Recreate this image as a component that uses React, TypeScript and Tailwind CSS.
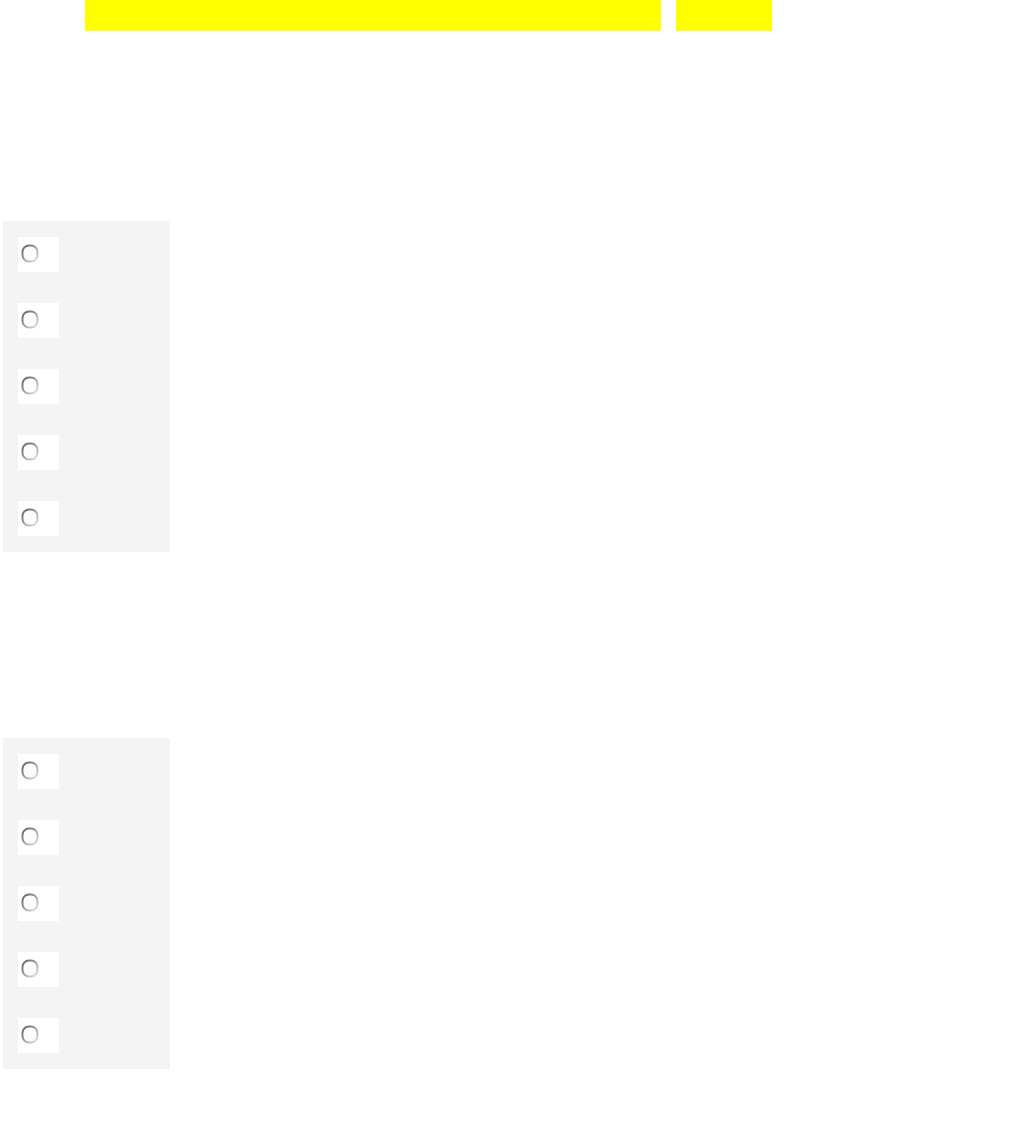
export default function App() {
    const rows = [0, 1, 2, 3, 4];

    function Radio() {
        return (
            <svg width="18" height="19" viewBox="0 0 18 19" className="block">
                <defs>
                    <linearGradient id="rg" x1="0" y1="0" x2="1" y2="1">
                        <stop offset="0%" stopColor="#5f5f5f" />
                        <stop offset="45%" stopColor="#9a9a9a" />
                        <stop offset="100%" stopColor="#e4e4e4" />
                    </linearGradient>
                </defs>
                <rect x="1.5" y="1.5" width="15" height="16" rx="6.5" fill="#fdfdfd" stroke="url(#rg)" strokeWidth="2" />
            </svg>
        );
    }

    function Panel({ top }: { top: string }) {
        return (
            <div className={`${top} ml-[3px] flex w-[167px] flex-col gap-[31px] bg-[#f4f4f4] px-[15px] py-[16px]`}>
                {rows.map((i) => (
                    <div key={i} className="flex h-[35px] w-[41px] items-start bg-white pl-[3px] pt-[7px]">
                        <Radio />
                    </div>
                ))}
            </div>
        );
    }

    return (
        <main className="min-h-[1144px] w-[1024px] bg-white font-['Liberation_Sans',sans-serif]">
            <div className="ml-[85px] flex gap-[15px]">
                <div className="h-[31px] w-[576px] bg-[#ffff00]" />
                <div className="h-[31px] w-[96px] bg-[#ffff00]" />
            </div>
            <Panel top="mt-[190px]" />
            <Panel top="mt-[186px]" />
        </main>
    );
}
